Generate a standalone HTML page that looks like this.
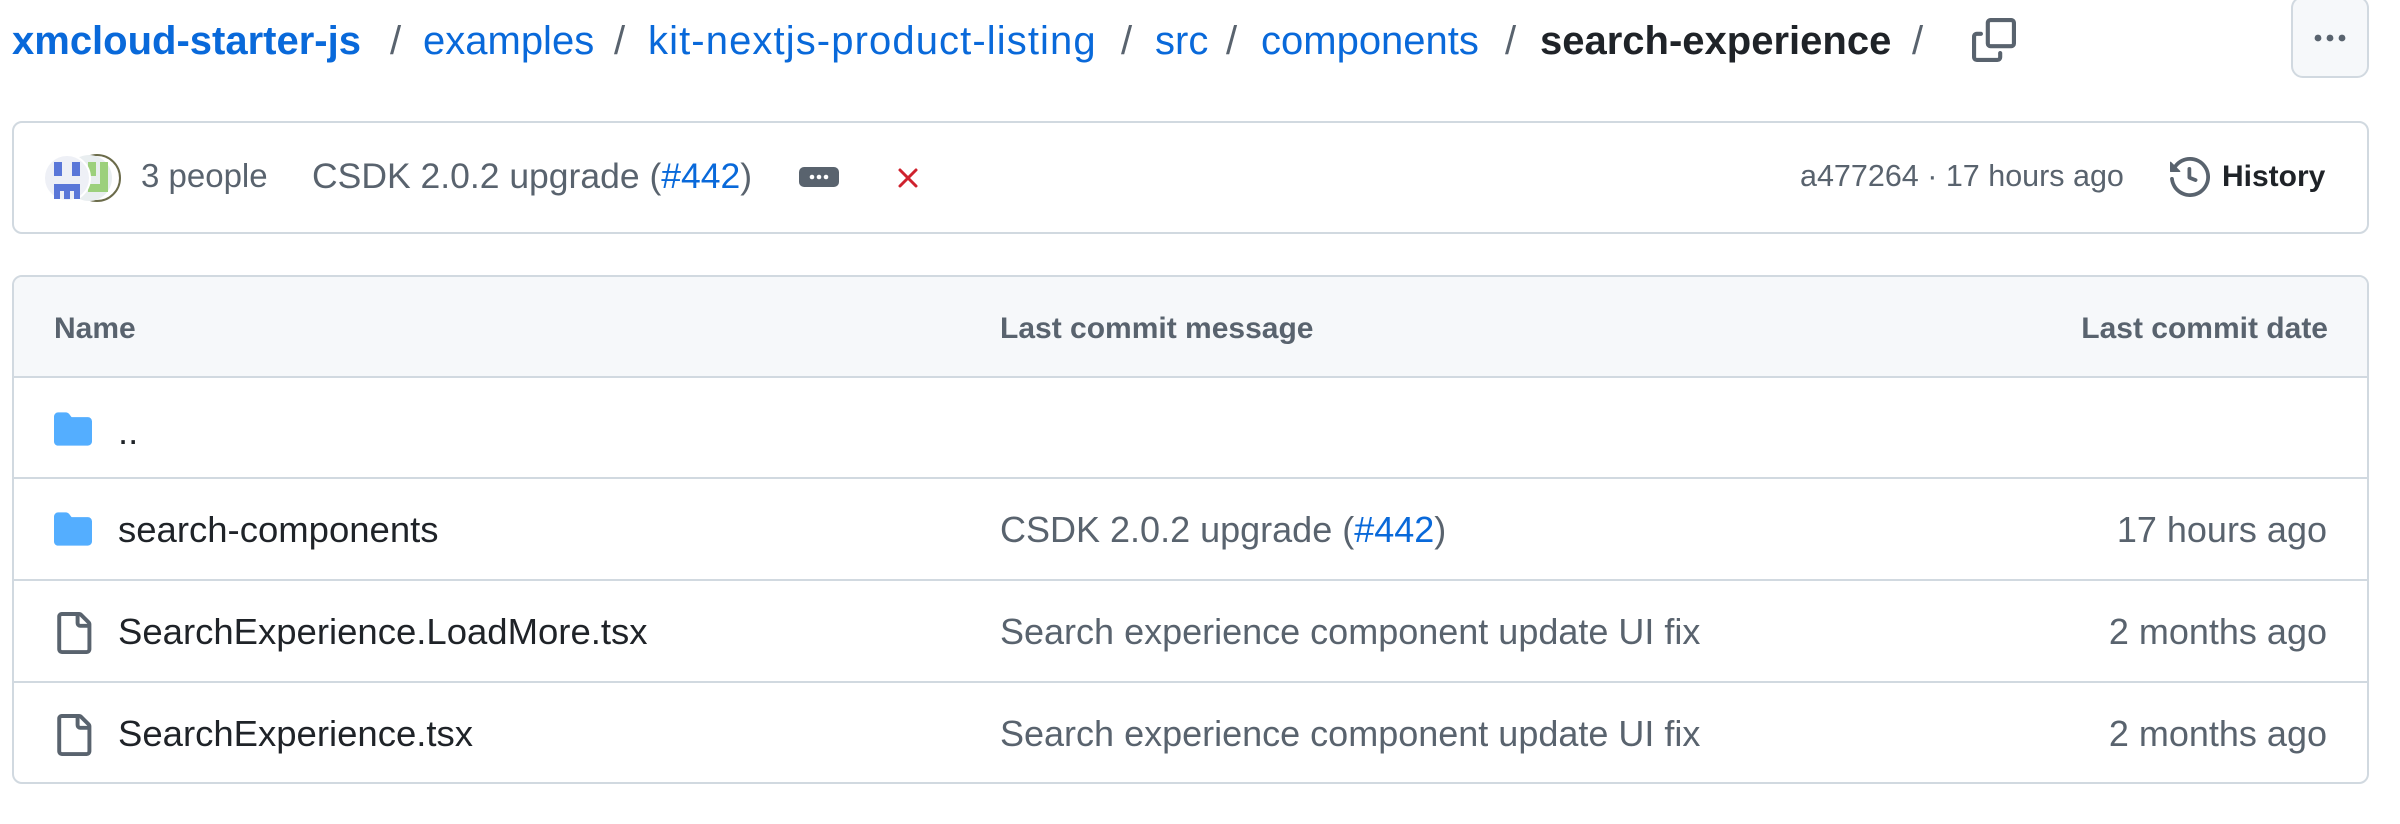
<!DOCTYPE html>
<html><head><meta charset="utf-8"><style>
*{margin:0;padding:0;box-sizing:border-box}
body{width:2400px;height:824px;background:#fff;position:relative;overflow:hidden;font-family:"Liberation Sans",Arial,sans-serif;color:#1f2328}
.a{position:absolute;white-space:nowrap;line-height:1}
.bc{font-size:40px;top:21px}
.blue{color:#0969da}
.sl{color:#59636e}
.box{position:absolute;border:2px solid #d1d9e0;border-radius:10px}
.rt{font-size:36.5px;color:#1f2328}
.msg{font-size:36px;color:#59636e}
.line{position:absolute;left:12px;width:2356px;height:2px;background:#d1d9e0}
</style></head><body>

<div class="a bc"><span style="position:absolute;left:12px;font-weight:bold" class="blue">xmcloud-starter-js</span></div>
<div class="a bc sl" style="left:390px">/</div>
<div class="a bc blue" style="left:423px">examples</div>
<div class="a bc sl" style="left:614px">/</div>
<div class="a bc blue" style="left:648px;letter-spacing:1.1px">kit-nextjs-product-listing</div>
<div class="a bc sl" style="left:1121px">/</div>
<div class="a bc blue" style="left:1155px">src</div>
<div class="a bc sl" style="left:1226px">/</div>
<div class="a bc blue" style="left:1261px">components</div>
<div class="a bc sl" style="left:1505px">/</div>
<div class="a bc" style="left:1540px;font-weight:bold">search-experience</div>
<div class="a bc sl" style="left:1912px">/</div>
<svg class="a" style="left:1972px;top:18px" width="44" height="44" viewBox="0 0 16 16"><path fill="#59636e" d="M0 6.75C0 5.784.784 5 1.750 5h1.5a.75.75 0 0 1 0 1.5h-1.5a.25.25 0 0 0-.25.25v7.5c0 .138.112.25.25.25h7.5a.25.25 0 0 0 .25-.25v-1.5a.75.75 0 0 1 1.5 0v1.5A1.75 1.75 0 0 1 9.25 16h-7.5A1.75 1.75 0 0 1 0 14.25Z"/><path fill="#59636e" d="M5 1.75C5 .784 5.784 0 6.75 0h7.5C15.216 0 16 .784 16 1.75v7.5A1.75 1.75 0 0 1 14.25 11h-7.5A1.75 1.75 0 0 1 5 9.25Zm1.75-.25a.25.25 0 0 0-.25.25v7.5c0 .138.112.25.25.25h7.5a.25.25 0 0 0 .25-.25v-7.5a.25.25 0 0 0-.25-.25Z"/></svg>
<div class="box" style="left:2291px;top:-4px;width:78px;height:82px;background:#f6f8fa;border-radius:12px"></div>
<svg class="a" style="left:2310px;top:26px" width="40" height="24" viewBox="0 0 40 24"><circle cx="8" cy="12" r="3.4" fill="#59636e"/><circle cx="20" cy="12" r="3.4" fill="#59636e"/><circle cx="32" cy="12" r="3.4" fill="#59636e"/></svg>

<div class="box" style="left:12px;top:121px;width:2357px;height:113px"></div>
<svg class="a" style="left:42px;top:152px" width="82" height="52" viewBox="0 0 82 52">
<circle cx="55" cy="26" r="23" fill="#fff" stroke="#6b6b4a" stroke-width="2"/>
<circle cx="47" cy="26" r="23" fill="#e9eef0"/>
<g fill="#9cd07c"><rect x="46" y="10" width="8" height="14"/><rect x="58" y="10" width="8" height="30"/><rect x="46" y="32" width="12" height="8"/></g>
<circle cx="25" cy="26" r="23" fill="#eef0f6" stroke="#fff" stroke-width="2"/>
<g fill="#5a77d8"><rect x="12" y="10" width="8" height="14"/><rect x="30" y="10" width="8" height="14"/><rect x="12" y="32" width="26" height="7"/><rect x="12" y="39" width="6" height="8"/><rect x="22" y="39" width="6" height="8"/><rect x="32" y="39" width="6" height="8"/></g>
</svg>
<div class="a sl" style="left:141px;top:159px;font-size:33px">3 people</div>
<div class="a sl" style="left:312px;top:159px;font-size:35.5px">CSDK 2.0.2 upgrade (<span class="blue">#442</span>)</div>
<div class="a" style="left:799px;top:167px;width:40px;height:20px;background:#59636e;border-radius:5px"></div>
<svg class="a" style="left:799px;top:167px" width="40" height="20"><circle cx="13" cy="10" r="2.3" fill="#fff"/><circle cx="20" cy="10" r="2.3" fill="#fff"/><circle cx="27" cy="10" r="2.3" fill="#fff"/></svg>
<svg class="a" style="left:897px;top:167px" width="22" height="22" viewBox="0 0 22 22"><path d="M3 3L19 19M19 3L3 19" stroke="#cf222e" stroke-width="3" stroke-linecap="round"/></svg>
<div class="a sl" style="left:1800px;top:161px;font-size:30.5px">a477264 · 17 hours ago</div>
<svg class="a" style="left:2170px;top:157px" width="40" height="40" viewBox="0 0 16 16"><path fill="#59636e" d="m.427 1.927 1.215 1.215a8.002 8.002 0 1 1-1.6 5.685.75.75 0 1 1 1.493-.154 6.5 6.5 0 1 0 1.180-4.458l1.358 1.358A.25.25 0 0 1 3.896 6H.25A.25.25 0 0 1 0 5.750V2.104a.25.25 0 0 1 .427-.177ZM7.75 4a.75.75 0 0 1 .75.75v2.992l2.028.812a.75.75 0 0 1-.557 1.392l-2.5-1A.751.751 0 0 1 7 8.25v-3.5A.75.75 0 0 1 7.75 4Z"/></svg>
<div class="a" style="left:2222px;top:162px;font-size:30px;font-weight:bold">History</div>

<div class="box" style="left:12px;top:275px;width:2357px;height:509px;overflow:hidden"><div style="height:101px;background:#f6f8fa"></div></div>
<div class="line" style="top:376px"></div>
<div class="line" style="top:477px"></div>
<div class="line" style="top:579px"></div>
<div class="line" style="top:681px"></div>
<div class="a sl" style="left:54px;top:314px;font-size:30px;font-weight:bold">Name</div>
<div class="a sl" style="left:1000px;top:314px;font-size:30px;font-weight:bold">Last commit message</div>
<div class="a sl" style="right:72px;top:314px;font-size:30px;font-weight:bold">Last commit date</div>

<svg class="a" style="left:52px;top:410px" width="42" height="38" viewBox="0 0 16 16"><path fill="#54aeff" d="M1.75 1A1.75 1.75 0 0 0 0 2.75v10.5C0 14.216.784 15 1.750 15h12.5A1.75 1.75 0 0 0 16 13.25v-8.5A1.75 1.75 0 0 0 14.25 3H7.5a.25.25 0 0 1-.2-.1l-.9-1.2C6.07 1.26 5.55 1 5 1H1.75Z"/></svg>
<div class="a rt" style="left:118px;top:414px">..</div>

<svg class="a" style="left:52px;top:510px" width="42" height="38" viewBox="0 0 16 16"><path fill="#54aeff" d="M1.75 1A1.75 1.75 0 0 0 0 2.75v10.5C0 14.216.784 15 1.750 15h12.5A1.75 1.75 0 0 0 16 13.25v-8.5A1.75 1.75 0 0 0 14.25 3H7.5a.25.25 0 0 1-.2-.1l-.9-1.2C6.07 1.26 5.55 1 5 1H1.75Z"/></svg>
<div class="a rt" style="left:118px;top:512px">search-components</div>
<div class="a msg" style="left:1000px;top:512px">CSDK 2.0.2 upgrade (<span class="blue">#442</span>)</div>
<div class="a msg" style="right:73px;top:512px">17 hours ago</div>

<svg class="a" style="left:52px;top:611px" width="42" height="44" viewBox="0 0 16 16"><path fill="#59636e" d="M2 1.75C2 .784 2.784 0 3.75 0h6.586c.464 0 .909.184 1.237.513l2.914 2.914c.329.328.513.773.513 1.237v9.586A1.75 1.75 0 0 1 13.25 16h-9.5A1.75 1.75 0 0 1 2 14.25Zm1.75-.25a.25.25 0 0 0-.25.25v12.5c0 .138.112.25.25.25h9.5a.25.25 0 0 0 .25-.25V6h-2.75A1.75 1.75 0 0 1 9 4.25V1.5Zm6.75.062V4.25c0 .138.112.25.25.25h2.688l-.011-.013-2.914-2.914-.013-.011Z"/></svg>
<div class="a rt" style="left:118px;top:614px">SearchExperience.LoadMore.tsx</div>
<div class="a msg" style="left:1000px;top:614px">Search experience component update UI fix</div>
<div class="a msg" style="right:73px;top:614px">2 months ago</div>

<svg class="a" style="left:52px;top:713px" width="42" height="44" viewBox="0 0 16 16"><path fill="#59636e" d="M2 1.75C2 .784 2.784 0 3.75 0h6.586c.464 0 .909.184 1.237.513l2.914 2.914c.329.328.513.773.513 1.237v9.586A1.75 1.75 0 0 1 13.25 16h-9.5A1.75 1.75 0 0 1 2 14.25Zm1.75-.25a.25.25 0 0 0-.25.25v12.5c0 .138.112.25.25.25h9.5a.25.25 0 0 0 .25-.25V6h-2.75A1.75 1.75 0 0 1 9 4.25V1.5Zm6.75.062V4.25c0 .138.112.25.25.25h2.688l-.011-.013-2.914-2.914-.013-.011Z"/></svg>
<div class="a rt" style="left:118px;top:716px">SearchExperience.tsx</div>
<div class="a msg" style="left:1000px;top:716px">Search experience component update UI fix</div>
<div class="a msg" style="right:73px;top:716px">2 months ago</div>

</body></html>
